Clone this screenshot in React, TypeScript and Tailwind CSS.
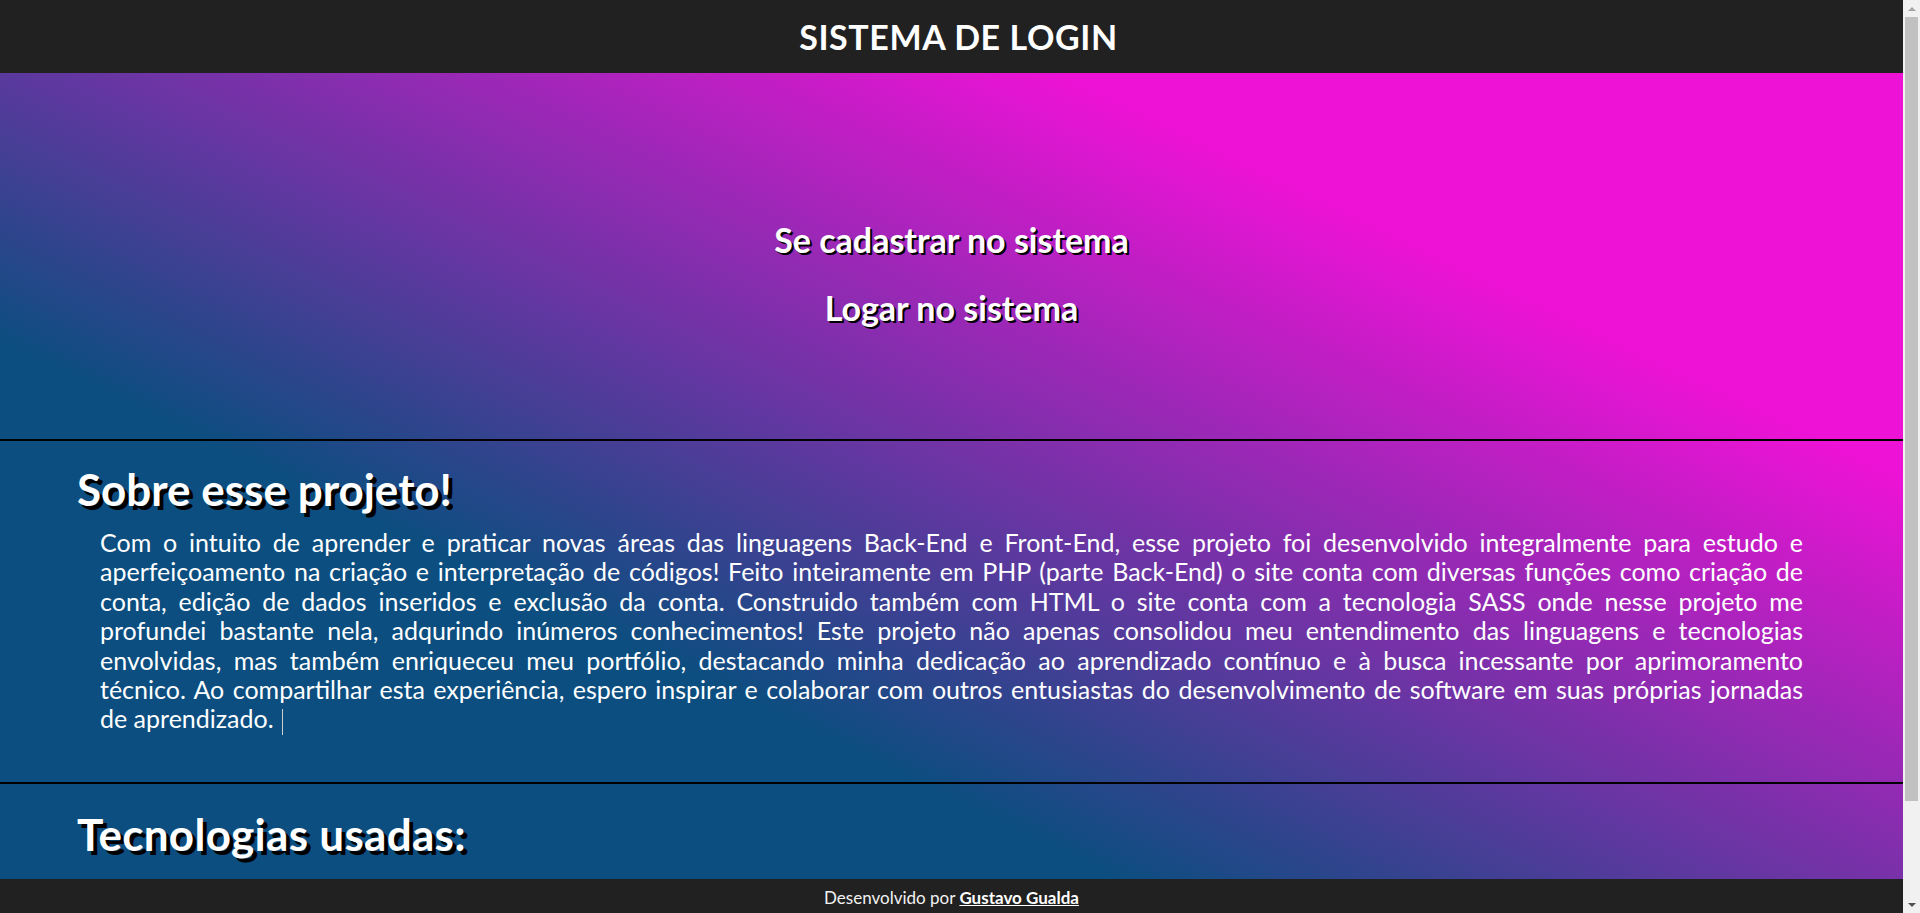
const aboutLines = [
	'Com o intuito de aprender e praticar novas áreas das linguagens Back-End e Front-End, esse projeto foi desenvolvido integralmente para estudo e',
	'aperfeiçoamento na criação e interpretação de códigos! Feito inteiramente em PHP (parte Back-End) o site conta com diversas funções como criação de',
	'conta, edição de dados inseridos e exclusão da conta. Construido também com HTML o site conta com a tecnologia SASS onde nesse projeto me',
	'profundei bastante nela, adqurindo inúmeros conhecimentos! Este projeto não apenas consolidou meu entendimento das linguagens e tecnologias',
	'envolvidas, mas também enriqueceu meu portfólio, destacando minha dedicação ao aprendizado contínuo e à busca incessante por aprimoramento',
	'técnico. Ao compartilhar esta experiência, espero inspirar e colaborar com outros entusiastas do desenvolvimento de software em suas próprias jornadas',
]

function Scrollbar(): JSX.Element {
	return (
		<aside className="w-[17px] h-screen shrink-0 bg-[#f1f1f1] flex flex-col">
			<div className="h-[17px] flex items-center justify-center">
				<svg width="8" height="4" viewBox="0 0 8 4">
					<polygon points="0,4 4,0 8,4" fill="#a3a3a3" />
				</svg>
			</div>
			<div className="flex-1 px-[2px]">
				<div className="h-[784px] bg-[#c1c1c1]" />
			</div>
			<div className="h-[17px] flex items-center justify-center">
				<svg width="8" height="4" viewBox="0 0 8 4">
					<polygon points="0,0 8,0 4,4" fill="#505050" />
				</svg>
			</div>
		</aside>
	)
}

export default function App(): JSX.Element {
	return (
		<div className="flex h-screen overflow-hidden font-['Lato',sans-serif] text-white">
			<main className="flex-1 h-screen overflow-y-auto bg-[linear-gradient(to_top_right,#0b4e7f_31%,#ee12d6_74%)]">
				<header className="h-[73px] bg-[#212121] flex items-center justify-center">
					<h1 className="pl-[14px] text-[34px] font-bold tracking-[0.6px]">SISTEMA DE LOGIN</h1>
				</header>

				<section className="h-[368px] border-b-2 border-black flex flex-col items-center pt-[146px] gap-[27px]">
					<a href="#" className="text-[34px] leading-[41px] font-bold [text-shadow:2px_2px_0_#000]">
						Se cadastrar no sistema
					</a>
					<a href="#" className="text-[34px] leading-[41px] font-bold [text-shadow:2px_2px_0_#000]">
						Logar no sistema
					</a>
				</section>

				<section className="h-[343px] border-b-2 border-black px-[77px] pt-[22px]">
					<h2 className="text-[44px] leading-[52px] font-bold [text-shadow:4px_4px_0_#000]">Sobre esse projeto!</h2>
					<div className="mt-[13px] px-[23px] text-[25px] leading-[29.4px]">
						{aboutLines.map((line) => (
							<div key={line} className="text-justify [text-align-last:justify]">
								{line}
							</div>
						))}
						<div>
							de aprendizado.
							<span className="inline-block w-px h-[26px] bg-[#cfcfcf] align-middle ml-[8px]" />
						</div>
					</div>
				</section>

				<section className="h-[209px] px-[77px] pt-[24px]">
					<h2 className="text-[44px] leading-[52px] font-bold tracking-[0.3px] [text-shadow:4px_4px_0_#000]">Tecnologias usadas:</h2>
				</section>

				<footer className="sticky bottom-0 h-[34px] pt-[3px] bg-[#212121] flex items-center justify-center text-[17px] text-[#f2f2f2]">
					<span>
						Desenvolvido por{' '}
						<a href="#" className="font-bold text-white underline">
							Gustavo Gualda
						</a>
					</span>
				</footer>
			</main>
			<Scrollbar />
		</div>
	)
}
